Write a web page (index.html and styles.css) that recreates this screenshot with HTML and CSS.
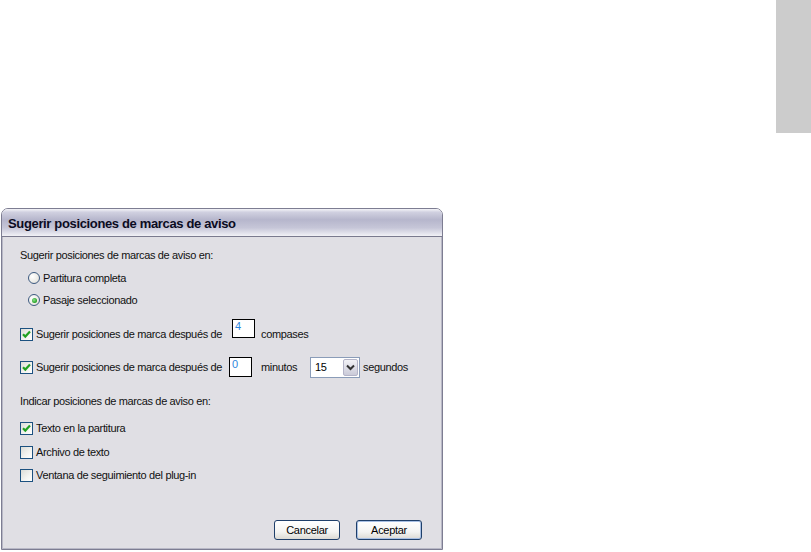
FILE: index.html
```html
<!DOCTYPE html>
<html lang="es">
<head>
    <meta charset="UTF-8">
    <meta name="viewport" content="width=device-width, initial-scale=1.0">
    <title>Sugerir posiciones de marcas de aviso</title>
    <link rel="stylesheet" href="styles.css">
</head>
<body>
    <div class="page">
        <div class="tab"></div>

        <div class="dialog">
            <div class="titlebar">Sugerir posiciones de marcas de aviso</div>
            <div class="dialog-body">
                <div class="row head">Sugerir posiciones de marcas de aviso en:</div>

                <div class="row radio-row r1">
                    <span class="radio"></span>
                    <span>Partitura completa</span>
                </div>
                <div class="row radio-row r2">
                    <span class="radio on"></span>
                    <span>Pasaje seleccionado</span>
                </div>

                <div class="row c1">
                    <span class="check on">
                        <svg width="11" height="11" viewBox="0 0 11 11"><path d="M2 5.2 L4.3 7.6 L9 2.6" fill="none" stroke="#21a121" stroke-width="2.2"/></svg>
                    </span>
                    <span class="lbl lbl1">Sugerir posiciones de marca después de</span>
                    <span class="numbox high">4</span>
                    <span class="after">compases</span>
                </div>

                <div class="row c2">
                    <span class="check on">
                        <svg width="11" height="11" viewBox="0 0 11 11"><path d="M2 5.2 L4.3 7.6 L9 2.6" fill="none" stroke="#21a121" stroke-width="2.2"/></svg>
                    </span>
                    <span class="lbl lbl2">Sugerir posiciones de marca después de</span>
                    <span class="numbox tall">0</span>
                    <span class="after mins">minutos</span>
                    <span class="select">
                        <span class="select-val">15</span>
                        <span class="select-btn">
                            <svg width="9" height="7" viewBox="0 0 9 7"><path d="M1 1.5 L4.5 5 L8 1.5" fill="none" stroke="#333" stroke-width="2"/></svg>
                        </span>
                    </span>
                    <span class="secs">segundos</span>
                </div>

                <div class="row head h2">Indicar posiciones de marcas de aviso en:</div>

                <div class="row c3">
                    <span class="check on">
                        <svg width="11" height="11" viewBox="0 0 11 11"><path d="M2 5.2 L4.3 7.6 L9 2.6" fill="none" stroke="#21a121" stroke-width="2.2"/></svg>
                    </span>
                    <span>Texto en la partitura</span>
                </div>
                <div class="row c4">
                    <span class="check"></span>
                    <span>Archivo de texto</span>
                </div>
                <div class="row c5">
                    <span class="check"></span>
                    <span>Ventana de seguimiento del plug-in</span>
                </div>

                <div class="buttons">
                    <button class="btn">Cancelar</button>
                    <button class="btn default">Aceptar</button>
                </div>
            </div>
        </div>
    </div>
</body>
</html>
```

FILE: styles.css
```css
* {
    margin: 0;
    padding: 0;
    box-sizing: border-box;
}

body {
    background: #fff;
    font-family: "Liberation Sans", Arial, sans-serif;
}

.page {
    display: grid;
    grid-template-columns: 776px 35px;
    grid-template-rows: 133px auto;
    width: 811px;
    height: 552px;
}

.tab {
    grid-column: 2;
    grid-row: 1;
    background: #cccccc;
}

.dialog {
    grid-column: 1;
    grid-row: 2;
    margin-top: 75px;
    margin-left: 1px;
    width: 442px;
    height: 342px;
    border: 1px solid #7d7d92;
    border-radius: 7px 7px 0 0;
    display: flex;
    flex-direction: column;
    overflow: hidden;
}

.titlebar {
    height: 28px;
    flex-shrink: 0;
    padding-left: 6px;
    line-height: 29px;
    font-size: 13px;
    font-weight: bold;
    letter-spacing: -0.35px;
    color: #0b0b22;
    background: linear-gradient(#f4f4f8 0%, #d0d0e0 12%, #b6b6cc 40%, #c6c6d8 70%, #e6e6ee 92%, #f2f2f6 100%);
    border-bottom: 1px solid #7a7a8e;
}

.dialog-body {
    flex: 1;
    background: #e0dfe4;
    border-left: 1px solid #b8b8c6;
    border-right: 1px solid #b8b8c6;
    border-bottom: 1px solid #b8b8c6;
    padding: 9px 0 0 17px;
    font-size: 11px;
    letter-spacing: -0.35px;
    color: #111;
    display: flex;
    flex-direction: column;
}

.row {
    display: flex;
    align-items: center;
    height: 18px;
    white-space: nowrap;
}

.radio-row {
    padding-left: 8px;
}

.r1 { margin-top: 5px; }
.r2 { margin-top: 4px; }
.c1 { margin-top: 16px; }
.c2 { margin-top: 13px; height: 22px; }
.h2 { margin-top: 14px; }
.c3 { margin-top: 9px; }
.c4 { margin-top: 6px; }
.c5 { margin-top: 5px; }

.radio {
    width: 12px;
    height: 12px;
    margin-right: 3px;
    border: 1px solid #3d5a80;
    border-radius: 50%;
    background: radial-gradient(circle at 35% 35%, #ffffff 0%, #ecebe6 60%, #d6d3cc 100%);
    display: flex;
    align-items: center;
    justify-content: center;
}

.radio.on::after {
    content: "";
    width: 5px;
    height: 5px;
    border-radius: 50%;
    background: radial-gradient(circle at 40% 40%, #8ee08e 0%, #21a121 70%);
}

.check {
    width: 13px;
    height: 13px;
    margin-right: 3px;
    border: 1px solid #1c5180;
    background: linear-gradient(135deg, #dcdcd7 0%, #f4f4f1 60%, #ffffff 100%);
    display: flex;
    align-items: center;
    justify-content: center;
}

.lbl1 { width: 196px; }
.lbl2 { width: 193px; }

.numbox {
    width: 23px;
    background: #fff;
    border: 1px solid #000;
    color: #2f86dc;
    font-size: 11px;
    line-height: 12px;
    padding-left: 2px;
    align-self: center;
}

.numbox.high {
    height: 19px;
    margin-bottom: 12px;
}

.numbox.tall {
    height: 20px;
}

.after {
    margin-left: 6px;
}

.mins {
    margin-left: 9px;
    width: 49px;
}

.select {
    width: 50px;
    height: 21px;
    border: 1px solid #8a9cb8;
    background: #fff;
    display: flex;
    align-items: stretch;
}

.select-val {
    flex: 1;
    font-size: 11px;
    line-height: 19px;
    padding-left: 4px;
    color: #000;
}

.select-btn {
    width: 15px;
    margin: 1px;
    border: 1px solid #b4b4c8;
    border-radius: 2px;
    background: linear-gradient(#f2f2f6, #cacad8);
    display: flex;
    align-items: center;
    justify-content: center;
}

.secs {
    margin-left: 3px;
}

.buttons {
    margin-top: auto;
    margin-bottom: 8px;
    padding-right: 19px;
    display: flex;
    justify-content: flex-end;
    gap: 16px;
}

.btn {
    width: 66px;
    height: 20px;
    font-family: "Liberation Sans", Arial, sans-serif;
    font-size: 11px;
    letter-spacing: -0.3px;
    color: #000;
    border: 1px solid #1f3f6a;
    border-radius: 3px;
    background: linear-gradient(#ffffff 0%, #f4f4f2 60%, #dcdad4 100%);
}

.btn.default {
    box-shadow: inset 0 0 0 1px #a8c0e4;
}
```
